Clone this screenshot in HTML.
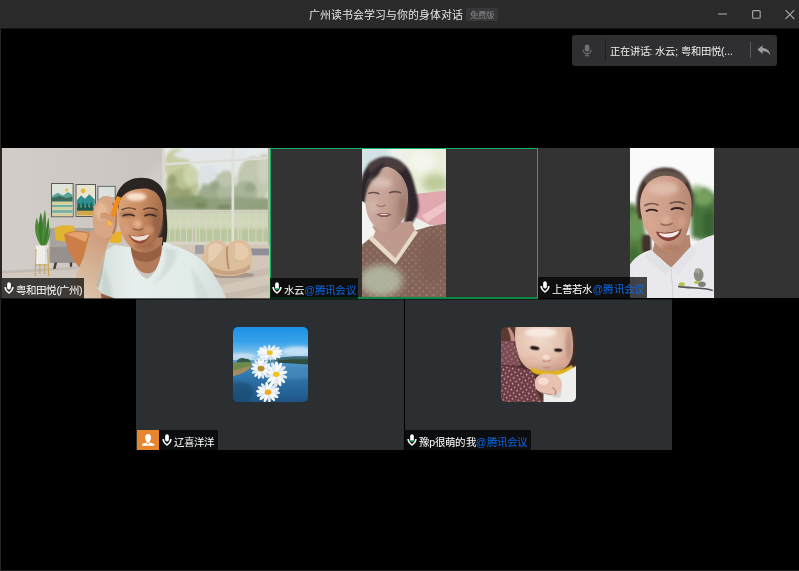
<!DOCTYPE html>
<html lang="zh-CN">
<head>
<meta charset="utf-8">
<title>广州读书会学习与你的身体对话</title>
<style>
*{margin:0;padding:0;box-sizing:border-box}
html,body{width:799px;height:571px;overflow:hidden;background:#000}
body{position:relative;-webkit-font-smoothing:antialiased;font-family:"Liberation Sans",sans-serif;color:#fff}
.abs{position:absolute}
#win{position:absolute;left:0;top:0;width:799px;height:571px;background:#000;will-change:transform}
#bl{position:absolute;left:0;top:0;width:1px;height:571px;background:#262626}
#bb{position:absolute;left:0;top:570px;width:799px;height:1px;background:#222}
#titlebar{position:absolute;left:0;top:0;width:799px;height:28px;background:#2a2a2a;box-shadow:0 1px 0 #181818}
#title{position:absolute;left:309px;top:1px;height:28px;line-height:28px;font-size:10.9px;color:#e6e6e6;white-space:nowrap}
#badge{position:absolute;left:466px;top:8px;width:32px;height:13px;line-height:15.5px;background:#37373a;border-radius:2px;font-size:8.4px;color:#8a8a8c;overflow:hidden;text-align:center;white-space:nowrap}
#speaker{position:absolute;left:572px;top:35px;width:205px;height:30.5px;background:#2f2f31;border-radius:3px}
#speaker .txt{position:absolute;left:37.5px;top:1px;height:30px;line-height:31px;font-size:10.25px;color:#f0f0f0;white-space:nowrap}
#speaker .d1{position:absolute;left:33px;top:4px;width:1px;height:23px;background:#1d1e22}
#speaker .d2{position:absolute;left:178px;top:7px;width:1px;height:16px;background:#5a5a5c}
.tile{position:absolute;width:268px;height:150px;background:#333;overflow:hidden}
.tile.b{background:#2c2f32}
.label{position:absolute;left:0;bottom:0;height:20px;line-height:24.6px;font-size:10.5px;letter-spacing:.15px;color:#fff;background:rgba(0,0,0,.71);white-space:nowrap;overflow:hidden;padding-left:14px;padding-right:0}
.label .at{color:#0c66e4}
.label svg.mic{position:absolute;left:2.3px;top:4.3px}
.avatar{position:absolute;left:97px;top:27px;width:75px;height:75px;border-radius:5px;overflow:hidden}
</style>
</head>
<body>
<div id="win">
  <div id="bl"></div><div id="bb"></div>
  <div id="titlebar">
    <div id="title">广州读书会学习与你的身体对话</div>
    <div id="badge">免费版</div>
    <svg class="abs" style="left:710px;top:0" width="89" height="28" viewBox="0 0 89 28">
      <path d="M8 14H17" stroke="#a6a6a6" stroke-width="1.1" fill="none"/>
      <rect x="42.6" y="10.6" width="7.6" height="7.6" rx="1" stroke="#a6a6a6" stroke-width="1.1" fill="none"/>
      <path d="M75.5 10.2L84.3 19M84.3 10.2L75.5 19" stroke="#a6a6a6" stroke-width="1.1" fill="none"/>
    </svg>
  </div>

  <div id="speaker">
    <svg class="abs" style="left:10px;top:9px" width="10.2" height="12.8" viewBox="0 0 12 15">
      <rect x="3.3" y="0.6" width="5.4" height="8.6" rx="2.7" fill="#707175"/>
      <path d="M1.3 6.6a4.7 4.7 0 0 0 9.4 0M6 11.3V13.6M3.4 13.8H8.6" stroke="#707175" stroke-width="1.4" fill="none"/>
    </svg>
    <div class="d1"></div>
    <div class="txt">正在讲话: 水云; 粤和田悦(...</div>
    <div class="d2"></div>
    <svg class="abs" style="left:185px;top:10px" width="14" height="11" viewBox="0 0 14 11">
      <path d="M5.6 0.3L0.4 4.6L5.6 8.9V6.3C9.2 6.2 11.6 7.4 13.2 10.4C13 6.2 10.6 3.2 5.6 2.9Z" fill="#9a9a9c"/>
    </svg>
  </div>

  <!-- TILE 1 -->
  <div class="tile" id="t1" style="left:1px;top:148px;width:269px;height:151px;background:#2b2b2b">
    <svg class="abs" style="left:1px;top:0" width="268" height="151" viewBox="0 0 268 151">
<defs>
<filter id="f1a" x="-20%" y="-20%" width="140%" height="140%"><feGaussianBlur stdDeviation="1.5"/></filter>
<filter id="f1b" x="-30%" y="-30%" width="160%" height="160%"><feGaussianBlur stdDeviation="4"/></filter>
<filter id="f1c" x="-30%" y="-30%" width="160%" height="160%"><feGaussianBlur stdDeviation="8"/></filter>
<linearGradient id="wall1" x1="0" y1="0" x2="1" y2="0"><stop offset="0" stop-color="#d2cdc9"/><stop offset="0.6" stop-color="#cac4c0"/><stop offset="1" stop-color="#c3bdb8"/></linearGradient>
<linearGradient id="sky1" x1="0" y1="0" x2="0" y2="1"><stop offset="0" stop-color="#e6eaec"/><stop offset="0.55" stop-color="#e2e7e2"/><stop offset="0.7" stop-color="#c3cdb0"/><stop offset="1" stop-color="#cdd6b4"/></linearGradient>
<linearGradient id="face1" x1="0" y1="0" x2="1" y2="0.3"><stop offset="0" stop-color="#dca67c"/><stop offset="0.5" stop-color="#cb8f66"/><stop offset="1" stop-color="#a46c48"/></linearGradient>
<linearGradient id="shirt1" x1="0" y1="0" x2="1" y2="0"><stop offset="0" stop-color="#d3dedb"/><stop offset="0.3" stop-color="#e6efed"/><stop offset="0.75" stop-color="#e1ebe8"/><stop offset="1" stop-color="#d2dcda"/></linearGradient>
<clipPath id="c1"><rect x="0" y="0" width="268" height="151"/></clipPath>
<linearGradient id="arm1" x1="0.7" y1="0" x2="0.2" y2="1"><stop offset="0" stop-color="#cf9a78"/><stop offset="0.45" stop-color="#d4b092"/><stop offset="1" stop-color="#dccab4"/></linearGradient>
</defs>
<g clip-path="url(#c1)"><g transform="translate(-2,-3) scale(0.340426)">
<!-- wall -->
<rect x="0" y="0" width="800" height="460" fill="url(#wall1)"/>
<path d="M480,40 L300,230 L380,230 L480,120Z" fill="#d8d3cf" opacity=".5" filter="url(#f1c)"/>
<!-- floor left -->
<path d="M0,374 L230,362 L230,460 L0,460Z" fill="#d2c9c0"/>
<path d="M0,370 L230,358 L230,365 L0,378Z" fill="#b9b0a8" opacity=".6"/>
<!-- window -->
<rect x="480" y="6" width="312" height="288" fill="url(#sky1)"/>
<g filter="url(#f1b)">
<ellipse cx="520" cy="60" rx="38" ry="50" fill="#c6cea2"/>
<ellipse cx="535" cy="120" rx="48" ry="50" fill="#b7c192"/>
<ellipse cx="512" cy="150" rx="30" ry="30" fill="#98a474"/>
<ellipse cx="560" cy="90" rx="22" ry="30" fill="#cdd4ac"/>
<ellipse cx="640" cy="130" rx="50" ry="45" fill="#adb89c"/>
<ellipse cx="610" cy="150" rx="30" ry="30" fill="#9eab8c"/>
<ellipse cx="665" cy="100" rx="25" ry="25" fill="#bac4aa"/>
<ellipse cx="745" cy="105" rx="48" ry="70" fill="#c0c8ae"/>
<ellipse cx="720" cy="140" rx="35" ry="35" fill="#a9b498"/>
<ellipse cx="775" cy="70" rx="20" ry="45" fill="#cbd1bc"/>
<rect x="480" y="156" width="312" height="36" fill="#8f9f7a"/>
<ellipse cx="560" cy="165" rx="50" ry="18" fill="#85966c"/>
<ellipse cx="700" cy="168" rx="60" ry="16" fill="#93a382"/>
<rect x="480" y="200" width="312" height="50" fill="#cfd8b6"/>
<rect x="480" y="245" width="312" height="45" fill="#b9c79e"/>
<ellipse cx="620" cy="28" rx="110" ry="18" fill="#e4e7e9"/>
<ellipse cx="610" cy="85" rx="28" ry="30" fill="#dde3e4"/>
</g>
<g filter="url(#f1b)" opacity=".7">
<ellipse cx="505" cy="105" rx="14" ry="18" fill="#8a9666"/>
<ellipse cx="548" cy="140" rx="16" ry="12" fill="#8a9666"/>
<ellipse cx="630" cy="120" rx="14" ry="14" fill="#8f9c80"/>
<ellipse cx="735" cy="125" rx="16" ry="14" fill="#93a084"/>
<ellipse cx="590" cy="178" rx="20" ry="8" fill="#6f8058"/>
<ellipse cx="660" cy="182" rx="22" ry="7" fill="#6f8058"/>
</g>
<!-- railing -->
<g stroke="#d9d5c6" stroke-width="3" fill="none" opacity=".92">
<path d="M486,193H792" stroke-width="4"/>
<path d="M498,196V285M514,196V285M530,196V285M548,196V285M566,196V285M586,196V285M606,196V285M626,196V285M648,196V285M668,196V285M708,196V285M730,196V285M752,196V285M772,196V285"/>
<path d="M576,196V285M700,196V285" stroke-width="5"/>
</g>
<path d="M486,210H792" stroke="#d2cfbe" stroke-width="2.5" opacity=".8"/>
<!-- window frames -->
<rect x="476" y="6" width="9" height="288" fill="#dcd7d1"/>
<path d="M481,53 L792,35 L792,42 L481,60Z" fill="#e0dcd6"/>
<rect x="680" y="6" width="8" height="288" fill="#e2ded8"/>
<rect x="480" y="284" width="312" height="9" fill="#dad3c8"/>
<rect x="787" y="6" width="7" height="454" fill="#b5aea6"/>
<!-- floor right -->
<rect x="486" y="293" width="306" height="170" fill="#d3c7b9"/>
<rect x="700" y="304" width="90" height="20" fill="#8f8e99"/>
<rect x="573" y="294" width="26" height="26" fill="#a09ea6"/>
<path d="M600,400 L790,360 L790,380 L620,420Z" fill="#c4b8aa" opacity=".7" filter="url(#f1a)"/>
<path d="M640,440 L790,410 L790,430 L680,456Z" fill="#c4b8aa" opacity=".7" filter="url(#f1a)"/>
<!-- beanbag -->
<ellipse cx="672" cy="382" rx="75" ry="9" fill="#a3968a" filter="url(#f1a)"/>
<g filter="url(#f1a)">
<path d="M597,335 C595,300 615,278 640,280 C655,281 664,290 668,300 C675,285 690,275 710,278 C735,283 745,315 740,345 C738,370 715,385 670,385 C625,385 600,370 597,335Z" fill="#dcbd9c"/>
<path d="M612,300 C625,285 645,285 655,300 C645,320 630,340 612,345Z" fill="#ead2b6" opacity=".8"/>
<path d="M690,290 C710,283 728,295 732,320 C720,340 700,345 690,330Z" fill="#e8cfb2" opacity=".8"/>
<path d="M668,298 C664,320 668,345 672,365" stroke="#b48c68" stroke-width="5" fill="none"/>
<path d="M610,350 C640,375 700,378 735,350 L735,365 C700,388 640,388 605,362Z" fill="#c39e7c" opacity=".8"/>
</g>
<!-- paintings -->
<g>
<rect x="150" y="112" width="66" height="100" fill="#454543"/>
<rect x="152.5" y="114.5" width="61" height="95" fill="#dfe5db"/>
<path d="M153,150 L170,140 L185,148 L200,138 L213,146 V165 H153Z" fill="#5aa595"/>
<path d="M153,156 L175,150 L195,156 L213,152 V168 H153Z" fill="#3a6a5a"/>
<rect x="153" y="166" width="60" height="43" fill="#d4d0a4"/>
<path d="M153,176 H213 V182 H153Z M153,192 H213 V199 H153Z" fill="#6ab0a4"/>
<circle cx="196" cy="132" r="5" fill="#e8c24a"/>
<rect x="222" y="115" width="60" height="96" fill="#454543"/>
<rect x="224.5" y="117.5" width="55" height="91" fill="#e8e4d2"/>
<circle cx="244" cy="135" r="7" fill="#e6b838"/>
<path d="M226,162 L238,148 L250,158 L262,145 L278,160 V180 H226Z" fill="#2f9090"/>
<path d="M226,185 L232,168 L238,185 L244,165 L250,185 L256,168 L262,185 L268,166 L274,185 L278,175 V196 H226Z" fill="#1d5a4e"/>
<rect x="226" y="193" width="52" height="14" fill="#d0a848"/>
<rect x="286" y="120" width="54" height="68" fill="#6a6a66"/>
<rect x="289" y="123" width="48" height="62" fill="#d9e2dd"/>
<path d="M289,160 L305,150 L320,160 L337,152 V185 H289Z" fill="#7ab4b0"/>
</g>
<!-- sofa -->
<path d="M146,250 Q146,244 155,244 L300,244 L300,345 L150,345 Q146,345 146,338Z" fill="#a9a39f"/>
<rect x="146" y="300" width="160" height="46" fill="#97918d"/>
<path d="M160,345 L156,364 L163,364 L168,345Z M205,345 L205,358 L212,358 L212,345Z" fill="#4a3c30"/>
<!-- cushions -->
<path d="M160,242 Q188,232 218,238 L220,280 Q190,286 164,280Z" fill="#e2b530"/>
<path d="M188,262 Q225,244 262,258 Q268,300 258,335 Q250,355 236,364 Q200,325 188,262Z" fill="#cd7d48"/>
<path d="M195,262 Q225,250 258,260 Q258,275 250,285 Q220,270 195,262Z" fill="#e9ab78" opacity=".8"/>
<!-- plant -->
<g fill="#4a8a38">
<path d="M122,298 C100,270 100,235 108,214 C118,240 122,270 124,298Z"/>
<path d="M122,298 C112,260 112,220 120,198 C128,225 130,265 126,298Z" fill="#3c7a30"/>
<path d="M124,298 C122,250 126,210 132,190 C138,220 136,265 128,298Z"/>
<path d="M126,298 C132,260 138,235 142,212 C148,245 140,280 130,298Z" fill="#3c7a30"/>
<path d="M128,298 C138,275 145,255 147,238 C150,265 142,288 132,298Z"/>
</g>
<rect x="105" y="295" width="36" height="56" rx="3" fill="#efede9"/>
<rect x="132" y="295" width="9" height="56" rx="3" fill="#e2dfda"/>
<path d="M106,305 L103,386 M140,305 L143,386 M117,350 V378 M131,350 V378 M104,352H142" stroke="#c9a04a" stroke-width="2.6" fill="none"/>
<!-- yellow bit under hand -->
<rect x="322" y="254" width="36" height="34" rx="8" fill="#e8b328"/>
<!-- hair -->
<path d="M338,200 C330,135 365,96 415,96 C468,96 494,135 488,190 C492,225 494,265 486,292 L462,292 L466,210 L350,215Z" fill="#2a2422"/>
<path d="M470,250 C480,262 488,280 480,296 L462,290Z" fill="#2a2422"/>
<!-- neck -->
<path d="M382,280 L384,320 C395,375 440,400 470,350 L478,270Z" fill="#b27a58"/>
<path d="M384,300 C410,325 450,320 475,290 L474,320 C450,350 410,350 386,325Z" fill="#925a3e" opacity=".8" filter="url(#f1a)"/>
<!-- face -->
<path d="M350,170 C358,136 398,126 430,128 C462,132 480,160 479,200 C479,252 456,300 413,314 C374,305 349,260 347,210Z" fill="url(#face1)"/>
<g filter="url(#f1b)">
<ellipse cx="400" cy="152" rx="30" ry="12" fill="#f8e2cc"/>
<ellipse cx="404" cy="232" rx="12" ry="12" fill="#e4ae8e"/>
<ellipse cx="368" cy="248" rx="14" ry="14" fill="#d99878"/>
<ellipse cx="462" cy="230" rx="14" ry="40" fill="#9a6446"/>
<ellipse cx="372" cy="204" rx="22" ry="9" fill="#8e5c40" opacity=".55"/>
<ellipse cx="442" cy="203" rx="22" ry="9" fill="#8e5c40" opacity=".55"/>
<ellipse cx="425" cy="296" rx="30" ry="10" fill="#a06848" opacity=".7"/>
<ellipse cx="436" cy="250" rx="16" ry="14" fill="#dca07a" opacity=".6"/>
</g>
<g stroke="#3b2722" fill="none" stroke-linecap="round">
<path d="M358,190 Q378,180 398,189" stroke-width="4" opacity=".75"/>
<path d="M422,189 Q442,180 462,191" stroke-width="4" opacity=".75"/>
<path d="M362,208 Q378,200 394,208" stroke-width="4.5"/>
<path d="M426,208 Q442,200 458,209" stroke-width="4.5"/>
<path d="M392,246 Q406,254 420,246" stroke-width="3" stroke="#8a523a"/>
</g>
<path d="M378,264 Q410,272 442,259 Q438,286 410,290 Q386,287 378,264Z" fill="#9a4a3c"/>
<path d="M382,265 Q410,274 440,261 Q436,279 410,282 Q388,279 382,265Z" fill="#ecdfd2"/>
<!-- t-shirt -->
<path d="M336,294 C310,308 290,330 282,360 C274,400 272,430 278,460 L668,460 C652,420 632,380 600,345 C570,315 520,296 480,284 C476,330 456,386 432,393 C405,386 388,340 384,300Z" fill="url(#shirt1)"/>
<g filter="url(#f1b)" opacity=".7">
<path d="M300,350 C320,380 330,420 330,460 L300,460Z" fill="#c3cfcc"/>
<path d="M480,300 C500,340 470,400 440,410 C480,400 520,350 520,310Z" fill="#cbd6d3"/>
<path d="M560,360 C590,390 610,430 620,460 L580,460Z" fill="#cfd9d6"/>
</g>
<!-- forearm -->
<path d="M200,460 L212,420 L226,375 L246,328 L266,250 L338,252 L318,288 L304,326 L290,376 L281,415 L298,434 L336,452 L336,460Z" fill="url(#arm1)"/>
<path d="M296,436 L336,450 L336,460 L300,460Z" fill="#8e5e48"/>
<path d="M281,415 L290,376 L304,326 L312,305 L300,380 L290,420Z" fill="#b08c70" opacity=".5" filter="url(#f1a)"/>
<!-- hand -->
<path d="M272,215 C270,180 290,150 315,150 C338,150 352,175 350,210 C350,245 338,272 312,274 C285,274 272,250 272,215Z" fill="#d8a683"/>
<path d="M330,170 C345,190 345,230 332,262" stroke="#b27c5c" stroke-width="5" fill="none" filter="url(#f1a)"/>
<ellipse cx="298" cy="195" rx="18" ry="26" fill="#e6b896" filter="url(#f1b)"/>
<!-- pen -->
<path d="M343,150 L356,154 L328,238 L314,233Z" fill="#ef8d1c"/>
<path d="M320,212 L334,217 L328,238 L314,233Z" fill="#f6b83a"/>
<path d="M296,200 C312,196 330,204 340,218 L334,232 C322,220 308,214 294,216Z" fill="#cf9976"/>
</g></g>
</svg>
    <div class="label" style="left:1px;width:82px;height:21px">
      <svg class="mic" width="10" height="13" viewBox="0 0 10 13"><rect x="3.15" y="0.3" width="3.7" height="7.1" rx="1.85" fill="#fff"/><path d="M1.1 4.9C1.1 7.2 2.6 9.2 5 11C7.4 9.2 8.9 7.2 8.9 4.9" stroke="#fff" stroke-width="1.5" fill="none" stroke-linejoin="miter"/></svg>粤和田悦<span style="letter-spacing:-.9px">(</span>广州<span style="margin-left:-.6px">)</span></div>
  </div>

  <!-- TILE 2 -->
  <div class="tile" id="t2" style="left:270px;top:148px;height:151px">
    <div class="abs" style="left:0;top:0;width:268px;height:151px;border:1px solid #0db45c;border-bottom:2px solid #0b8a47"></div>
    <svg class="abs" style="left:92px;top:1px" width="84" height="148" viewBox="0 0 84 148">
<defs>
<filter id="f2a" x="-20%" y="-20%" width="140%" height="140%"><feGaussianBlur stdDeviation="2.5"/></filter>
<filter id="f2b" x="-30%" y="-30%" width="160%" height="160%"><feGaussianBlur stdDeviation="7"/></filter>
<filter id="f2m" x="-30%" y="-30%" width="160%" height="160%"><feGaussianBlur stdDeviation="4.5"/></filter>
<filter id="f2c" x="-40%" y="-40%" width="180%" height="180%"><feGaussianBlur stdDeviation="14"/></filter>
<linearGradient id="face2" x1="0" y1="0" x2="1" y2="0.2"><stop offset="0" stop-color="#cfb0a4"/><stop offset="0.6" stop-color="#c5a194"/><stop offset="1" stop-color="#a98478"/></linearGradient>
<pattern id="dots2" width="26" height="26" patternUnits="userSpaceOnUse"><circle cx="6" cy="7" r="3.2" fill="#bfa898"/><circle cx="19" cy="20" r="3.2" fill="#b39c8c"/></pattern>
<clipPath id="c2"><rect x="0" y="0" width="84" height="148"/></clipPath>
</defs>
<g clip-path="url(#c2)"><g transform="scale(0.27137) translate(-80,-15)">
<rect x="70" y="0" width="330" height="580" fill="#eef0ec"/>
<rect x="70" y="0" width="110" height="120" fill="#d2e2e6" filter="url(#f2c)"/>
<!-- bright bg top-right -->
<g filter="url(#f2c)">
<rect x="240" y="10" width="160" height="180" fill="#e9eed8"/>
<ellipse cx="350" cy="140" rx="50" ry="35" fill="#bccb98"/>
<ellipse cx="300" cy="60" rx="50" ry="40" fill="#f4f6ee"/>
</g>
<!-- pink cloth -->
<g filter="url(#f2a)">
<path d="M262,182 L395,168 L395,295 L330,295 L268,262Z" fill="#e2a8b0"/>
<path d="M300,260 L395,205 L395,235 L320,285Z" fill="#efc4c8"/>
<path d="M285,200 L395,178 L395,192 L290,218Z" fill="#e3a8b0"/>
</g>
<!-- hair -->
<g filter="url(#f2m)">
<path d="M70,215 C66,120 95,52 160,44 C215,40 255,76 270,135 C284,190 292,215 288,240 C282,262 268,285 258,296 L236,292 L244,160 L100,150 L90,215Z" fill="#2e272b"/>
<path d="M100,72 C130,40 200,36 240,78 L230,96 L110,104Z" fill="#55494c" opacity=".7"/>
</g>
<!-- neck -->
<path d="M118,300 L118,345 L203,424 L278,322 L262,280Z" fill="#bf998b"/>
<!-- face -->
<g filter="url(#f2a)">
<path d="M90,165 C96,120 135,84 175,80 C222,92 250,140 250,190 C250,250 222,312 172,324 C126,318 90,262 88,200Z" fill="url(#face2)"/>
</g>
<path d="M74,210 C78,150 110,95 165,62 C150,100 125,135 104,150 C96,170 92,190 88,215Z" fill="#2e272b" filter="url(#f2m)"/>
<g filter="url(#f2b)">
<ellipse cx="150" cy="140" rx="40" ry="18" fill="#d9beb2"/>
<ellipse cx="120" cy="225" rx="18" ry="25" fill="#d4b4a8"/>
<ellipse cx="230" cy="230" rx="14" ry="45" fill="#a07c70"/>
</g>
<g filter="url(#f2a)" stroke-linecap="round" fill="none">
<path d="M105,178 Q125,172 142,180" stroke="#6a5050" stroke-width="6"/>
<path d="M182,176 Q202,168 222,176" stroke="#6a5050" stroke-width="6"/>
<path d="M135,222 Q150,232 166,222" stroke="#a07a70" stroke-width="5"/>
<path d="M132,256 Q160,246 190,256 Q162,276 132,256Z" fill="#8f5658" stroke="none"/>
<path d="M142,256 Q160,252 180,256 Q160,262 142,256Z" fill="#e6d6d0" stroke="none"/>
</g>
<!-- white patch left -->
<path d="M78,205 L92,215 C96,260 112,300 130,318 L118,345 L78,372Z" fill="#f3f3f1" filter="url(#f2a)"/>
<!-- shirt -->
<path d="M70,376 L116,338 L203,420 L274,316 L330,300 L395,290 L395,580 L70,580Z" fill="#846458"/>
<path d="M70,376 L116,338 L203,420 L274,316 L330,300 L395,290 L395,580 L70,580Z" fill="url(#dots2)" opacity=".55"/>
<path d="M117,335 L203,417 L273,314 L287,321 L204,441 L103,346Z" fill="#e6dac6" filter="url(#f2a)"/>
<g filter="url(#f2c)">
<ellipse cx="150" cy="500" rx="80" ry="58" fill="#b9c4ac" opacity=".8"/>
<ellipse cx="340" cy="420" rx="50" ry="90" fill="#7a5c50" opacity=".6"/>
</g>
</g></g>
</svg>
    <div class="label" style="width:88px;height:21px">
      <svg class="mic" width="10" height="13" viewBox="0 0 10 13"><rect x="3.15" y="0.3" width="3.7" height="7.1" rx="1.85" fill="#fff"/><rect x="3.15" y="5.9" width="3.7" height="1.5" rx="0.75" fill="#1fc465"/><path d="M1.1 4.9C1.1 7.2 2.6 9.2 5 11C7.4 9.2 8.9 7.2 8.9 4.9" stroke="#fff" stroke-width="1.5" fill="none" stroke-linejoin="miter"/></svg>水云<span class="at">@腾讯会议</span></div>
  </div>

  <!-- TILE 3 -->
  <div class="tile" id="t3" style="left:538px;width:261px;top:148px">
    <svg class="abs" style="left:92px;top:0" width="84" height="151" viewBox="0 0 84 151">
<defs>
<filter id="f3a" x="-20%" y="-20%" width="140%" height="140%"><feGaussianBlur stdDeviation="2.5"/></filter>
<filter id="f3b" x="-30%" y="-30%" width="160%" height="160%"><feGaussianBlur stdDeviation="7"/></filter>
<filter id="f3m" x="-30%" y="-30%" width="160%" height="160%"><feGaussianBlur stdDeviation="4"/></filter>
<filter id="f3c" x="-40%" y="-40%" width="180%" height="180%"><feGaussianBlur stdDeviation="12"/></filter>
<linearGradient id="face3" x1="0" y1="0" x2="1" y2="0.2"><stop offset="0" stop-color="#d8ae9a"/><stop offset="0.55" stop-color="#cfa08b"/><stop offset="1" stop-color="#b68872"/></linearGradient>
<clipPath id="c3"><rect x="0" y="0" width="84" height="151"/></clipPath>
</defs>
<g clip-path="url(#c3)"><g transform="scale(0.27137) translate(-73,-10)">
<rect x="60" y="0" width="340" height="580" fill="#fafafa"/>
<!-- trees -->
<g filter="url(#f3b)">
<path d="M60,215 C85,205 110,230 125,260 L140,480 L60,500Z" fill="#527e40"/>
<ellipse cx="92" cy="300" rx="30" ry="50" fill="#6b9654"/>
<ellipse cx="85" cy="420" rx="25" ry="50" fill="#426e36"/>
<path d="M295,170 C320,140 360,150 395,190 L395,365 L300,340Z" fill="#46763c"/>
<ellipse cx="345" cy="195" rx="35" ry="28" fill="#76a05e"/>
<ellipse cx="365" cy="290" rx="25" ry="50" fill="#386432"/>
<ellipse cx="318" cy="160" rx="18" ry="14" fill="#98b87c"/>
</g>
<!-- ponytail -->
<path d="M120,330 C112,370 120,410 134,425 L152,400 L150,330Z" fill="#3f302b" filter="url(#f3m)"/>
<!-- hair -->
<g filter="url(#f3m)">
<path d="M98,240 C88,152 130,84 200,82 C262,80 306,130 307,205 L302,262 L106,272Z" fill="#45352f"/>
<path d="M122,122 C150,84 245,80 284,126 L270,150 L135,150Z" fill="#6e5c56" opacity=".8"/>
</g>
<!-- neck -->
<path d="M165,350 L150,420 L225,450 L300,395 L292,330Z" fill="#b58670"/>
<!-- face -->
<g filter="url(#f3a)">
<path d="M110,215 C112,150 155,112 205,112 C258,112 298,152 300,215 C302,290 275,375 225,397 C170,385 112,310 110,215Z" fill="url(#face3)"/>
</g>
<g filter="url(#f3b)">
<ellipse cx="195" cy="160" rx="55" ry="24" fill="#dfbcaa"/>
<ellipse cx="150" cy="290" rx="20" ry="22" fill="#dba48c"/>
<ellipse cx="262" cy="282" rx="18" ry="24" fill="#d39c84"/>
<ellipse cx="205" cy="275" rx="14" ry="14" fill="#e0b098"/>
<ellipse cx="225" cy="380" rx="40" ry="14" fill="#b07e66"/>
</g>
<g filter="url(#f3a)" stroke-linecap="round" fill="none">
<path d="M128,222 Q152,208 176,220" stroke="#5a4038" stroke-width="6" opacity=".8"/>
<path d="M222,214 Q250,202 276,216" stroke="#5a4038" stroke-width="6" opacity=".8"/>
<path d="M134,242 Q152,232 172,242" stroke="#35241f" stroke-width="7"/>
<path d="M226,236 Q246,226 268,236" stroke="#35241f" stroke-width="7"/>
<path d="M188,290 Q206,300 228,288" stroke="#9a6a54" stroke-width="6"/>
<path d="M168,318 Q215,330 264,308 Q258,348 216,354 Q178,350 168,318Z" fill="#8a4238" stroke="none"/>
<path d="M178,322 Q215,332 256,314 Q250,336 216,340 Q186,338 178,322Z" fill="#f3ece8" stroke="none"/>
</g>
<!-- shirt -->
<path d="M60,470 C70,430 100,400 150,385 L225,452 L300,370 C340,340 380,330 400,325 L400,580 L60,580Z" fill="#e9e9ed"/>
<g filter="url(#f3a)">
<path d="M150,385 L225,452 L205,480 L128,410Z" fill="#e2e2e6"/>
<path d="M300,370 L225,452 L250,478 L322,392Z" fill="#e4e4e8"/>
<path d="M80,480 C100,500 110,540 108,575 L75,575Z" fill="#d9dade" opacity=".8"/>
<path d="M225,455 L232,575" stroke="#d4d4d8" stroke-width="4" fill="none"/>
</g>
<!-- embroidery -->
<g filter="url(#f3a)">
<path d="M250,520 C290,528 340,522 378,535" stroke="#55565a" stroke-width="6" fill="none"/>
<ellipse cx="326" cy="478" rx="18" ry="24" fill="#8b8b82"/>
<ellipse cx="322" cy="462" rx="10" ry="9" fill="#a3a398"/>
<ellipse cx="338" cy="512" rx="14" ry="10" fill="#7e8078"/>
<ellipse cx="264" cy="512" rx="11" ry="7" fill="#b7c044"/>
<ellipse cx="318" cy="505" rx="9" ry="6" fill="#b7c044"/>
</g>
</g></g>
</svg>
    <div class="label" style="width:109px;height:21px">
      <svg class="mic" width="10" height="13" viewBox="0 0 10 13"><rect x="3.15" y="0.3" width="3.7" height="7.1" rx="1.85" fill="#fff"/><path d="M1.1 4.9C1.1 7.2 2.6 9.2 5 11C7.4 9.2 8.9 7.2 8.9 4.9" stroke="#fff" stroke-width="1.5" fill="none" stroke-linejoin="miter"/></svg>上善若水<span class="at">@腾讯会议</span></div>
  </div>

  <div class="abs" style="left:0;top:298px;width:270px;height:1px;background:rgba(0,0,0,.6)"></div>
  <div class="abs" style="left:538px;top:298px;width:261px;height:1px;background:rgba(0,0,0,.6)"></div>

  <div class="abs" style="left:136px;top:299px;width:268px;height:1px;background:#191b1d"></div>
  <div class="abs" style="left:405px;top:299px;width:267px;height:1px;background:#191b1d"></div>
  <!-- TILE 4 -->
  <div class="tile b" id="t4" style="left:136px;top:300px">
    <div class="avatar"><svg class="abs" style="left:0;top:0" width="75" height="75" viewBox="0 0 75 75">
<defs>
<filter id="fa1" x="-20%" y="-20%" width="140%" height="140%"><feGaussianBlur stdDeviation="2"/></filter>
<filter id="fa2" x="-30%" y="-30%" width="160%" height="160%"><feGaussianBlur stdDeviation="8"/></filter>
<linearGradient id="skyA" x1="0" y1="0" x2="0" y2="1"><stop offset="0" stop-color="#1a8ee2"/><stop offset="0.45" stop-color="#36a2ea"/><stop offset="0.8" stop-color="#7cc0ec"/><stop offset="1" stop-color="#b4d8f0"/></linearGradient>
<linearGradient id="waterA" x1="0" y1="0" x2="0" y2="1"><stop offset="0" stop-color="#5a9fd2"/><stop offset="0.3" stop-color="#3379b2"/><stop offset="1" stop-color="#1d5484"/></linearGradient>
</defs>
<g transform="scale(0.17516) translate(-103,-68)">
<rect x="95" y="60" width="445" height="200" fill="url(#skyA)"/>
<g filter="url(#fa2)">
<ellipse cx="470" cy="208" rx="90" ry="28" fill="#c2dff4"/>
<ellipse cx="160" cy="235" rx="70" ry="18" fill="#c4dff2"/>
</g>
<rect x="95" y="258" width="445" height="245" fill="url(#waterA)"/>
<g filter="url(#fa2)"><ellipse cx="460" cy="335" rx="90" ry="30" fill="#4f8fbe" opacity=".55"/><ellipse cx="140" cy="440" rx="80" ry="60" fill="#173f60" opacity=".5"/><rect x="60" y="40" width="520" height="10" fill="#000" opacity="0"/></g>
<g filter="url(#fa1)">
<path d="M335,250 C380,238 440,232 535,236 L535,262 L335,262Z" fill="#3f6772"/>
<path d="M350,262 C400,252 470,250 535,254 L535,282 C470,276 400,274 350,270Z" fill="#2d4c3c"/>
<path d="M125,262 C135,244 160,240 175,250 C190,246 200,256 205,268 L125,272Z" fill="#34584a"/>
<path d="M95,272 L205,268 C215,290 200,310 170,325 C140,340 115,345 95,352Z" fill="#6d8a4e"/>
<path d="M95,318 C130,312 170,300 205,288 C200,310 160,335 95,352Z" fill="#a58c60"/>
<path d="M312,250 C300,300 305,350 300,400" stroke="#4a7a4c" stroke-width="7" fill="none"/>
<path d="M320,255 C335,280 340,300 345,330" stroke="#4a7a4c" stroke-width="6" fill="none"/>
</g>
<g filter="url(#fa1)">
<ellipse cx="354.1" cy="219.4" rx="32.8" ry="11.2" fill="#dfe9f2" transform="rotate(6.2 354.1 219.4)"/>
<ellipse cx="346.9" cy="229.9" rx="29.4" ry="10.0" fill="#f6f8fa" transform="rotate(23.7 346.9 229.9)"/>
<ellipse cx="333.0" cy="237.4" rx="23.8" ry="8.1" fill="#f6f8fa" transform="rotate(48.3 333.0 237.4)"/>
<ellipse cx="315.1" cy="240.5" rx="20.3" ry="6.9" fill="#dfe9f2" transform="rotate(85.3 315.1 240.5)"/>
<ellipse cx="296.8" cy="238.5" rx="22.7" ry="7.7" fill="#f6f8fa" transform="rotate(124.6 296.8 238.5)"/>
<ellipse cx="281.7" cy="231.9" rx="28.2" ry="9.6" fill="#f6f8fa" transform="rotate(151.7 281.7 231.9)"/>
<ellipse cx="272.8" cy="221.9" rx="32.3" ry="11.0" fill="#dfe9f2" transform="rotate(170.2 272.8 221.9)"/>
<ellipse cx="271.9" cy="210.6" rx="32.8" ry="11.2" fill="#f6f8fa" transform="rotate(-173.8 271.9 210.6)"/>
<ellipse cx="279.1" cy="200.1" rx="29.4" ry="10.0" fill="#f6f8fa" transform="rotate(-156.3 279.1 200.1)"/>
<ellipse cx="293.0" cy="192.6" rx="23.8" ry="8.1" fill="#dfe9f2" transform="rotate(-131.7 293.0 192.6)"/>
<ellipse cx="310.9" cy="189.5" rx="20.3" ry="6.9" fill="#f6f8fa" transform="rotate(-94.7 310.9 189.5)"/>
<ellipse cx="329.2" cy="191.5" rx="22.7" ry="7.7" fill="#f6f8fa" transform="rotate(-55.4 329.2 191.5)"/>
<ellipse cx="344.3" cy="198.1" rx="28.2" ry="9.6" fill="#dfe9f2" transform="rotate(-28.3 344.3 198.1)"/>
<ellipse cx="353.2" cy="208.1" rx="32.3" ry="11.0" fill="#f6f8fa" transform="rotate(-9.8 353.2 208.1)"/>
<ellipse cx="313" cy="215" rx="17" ry="13.6" fill="#f2c21c"/>
<ellipse cx="295.5" cy="305.0" rx="25.8" ry="8.8" fill="#dfe9f2" transform="rotate(0.0 295.5 305.0)"/>
<ellipse cx="292.3" cy="319.6" rx="25.9" ry="8.8" fill="#f6f8fa" transform="rotate(26.5 292.3 319.6)"/>
<ellipse cx="283.3" cy="331.3" rx="26.3" ry="9.0" fill="#f6f8fa" transform="rotate(52.4 283.3 331.3)"/>
<ellipse cx="270.2" cy="337.8" rx="26.6" ry="9.1" fill="#dfe9f2" transform="rotate(77.6 270.2 337.8)"/>
<ellipse cx="255.8" cy="337.8" rx="26.6" ry="9.1" fill="#f6f8fa" transform="rotate(102.4 255.8 337.8)"/>
<ellipse cx="242.7" cy="331.3" rx="26.3" ry="9.0" fill="#f6f8fa" transform="rotate(127.6 242.7 331.3)"/>
<ellipse cx="233.7" cy="319.6" rx="25.9" ry="8.8" fill="#dfe9f2" transform="rotate(153.5 233.7 319.6)"/>
<ellipse cx="230.5" cy="305.0" rx="25.8" ry="8.8" fill="#f6f8fa" transform="rotate(180.0 230.5 305.0)"/>
<ellipse cx="233.7" cy="290.4" rx="25.9" ry="8.8" fill="#f6f8fa" transform="rotate(-153.5 233.7 290.4)"/>
<ellipse cx="242.7" cy="278.7" rx="26.3" ry="9.0" fill="#dfe9f2" transform="rotate(-127.6 242.7 278.7)"/>
<ellipse cx="255.8" cy="272.2" rx="26.6" ry="9.1" fill="#f6f8fa" transform="rotate(-102.4 255.8 272.2)"/>
<ellipse cx="270.2" cy="272.2" rx="26.6" ry="9.1" fill="#f6f8fa" transform="rotate(-77.6 270.2 272.2)"/>
<ellipse cx="283.3" cy="278.7" rx="26.3" ry="9.0" fill="#dfe9f2" transform="rotate(-52.4 283.3 278.7)"/>
<ellipse cx="292.3" cy="290.4" rx="25.9" ry="8.8" fill="#f6f8fa" transform="rotate(-26.5 292.3 290.4)"/>
<ellipse cx="263" cy="305" rx="20" ry="16.0" fill="#b88c34"/>
<ellipse cx="384.7" cy="348.8" rx="28.9" ry="9.8" fill="#dfe9f2" transform="rotate(17.3 384.7 348.8)"/>
<ellipse cx="377.3" cy="365.2" rx="30.6" ry="10.4" fill="#f6f8fa" transform="rotate(45.0 377.3 365.2)"/>
<ellipse cx="364.4" cy="376.3" rx="32.4" ry="11.0" fill="#f6f8fa" transform="rotate(69.4 364.4 376.3)"/>
<ellipse cx="348.7" cy="379.7" rx="33.1" ry="11.3" fill="#dfe9f2" transform="rotate(91.8 348.7 379.7)"/>
<ellipse cx="333.2" cy="374.9" rx="32.2" ry="10.9" fill="#f6f8fa" transform="rotate(114.5 333.2 374.9)"/>
<ellipse cx="321.1" cy="362.8" rx="30.2" ry="10.3" fill="#f6f8fa" transform="rotate(139.4 321.1 362.8)"/>
<ellipse cx="314.7" cy="345.8" rx="28.7" ry="9.8" fill="#dfe9f2" transform="rotate(167.6 314.7 345.8)"/>
<ellipse cx="315.3" cy="327.2" rx="28.9" ry="9.8" fill="#f6f8fa" transform="rotate(-162.7 315.3 327.2)"/>
<ellipse cx="322.7" cy="310.8" rx="30.6" ry="10.4" fill="#f6f8fa" transform="rotate(-135.0 322.7 310.8)"/>
<ellipse cx="335.6" cy="299.7" rx="32.4" ry="11.0" fill="#dfe9f2" transform="rotate(-110.6 335.6 299.7)"/>
<ellipse cx="351.3" cy="296.3" rx="33.1" ry="11.3" fill="#f6f8fa" transform="rotate(-88.2 351.3 296.3)"/>
<ellipse cx="366.8" cy="301.1" rx="32.2" ry="10.9" fill="#f6f8fa" transform="rotate(-65.5 366.8 301.1)"/>
<ellipse cx="378.9" cy="313.2" rx="30.2" ry="10.3" fill="#dfe9f2" transform="rotate(-40.6 378.9 313.2)"/>
<ellipse cx="385.3" cy="330.2" rx="28.7" ry="9.8" fill="#f6f8fa" transform="rotate(-12.4 385.3 330.2)"/>
<ellipse cx="350" cy="338" rx="19" ry="15.2" fill="#f0c41e"/>
<ellipse cx="341.1" cy="442.9" rx="30.3" ry="10.3" fill="#dfe9f2" transform="rotate(4.4 341.1 442.9)"/>
<ellipse cx="335.9" cy="457.2" rx="29.4" ry="10.0" fill="#f6f8fa" transform="rotate(27.6 335.9 457.2)"/>
<ellipse cx="324.2" cy="468.0" rx="27.9" ry="9.5" fill="#f6f8fa" transform="rotate(52.9 324.2 468.0)"/>
<ellipse cx="308.2" cy="473.3" rx="26.8" ry="9.1" fill="#dfe9f2" transform="rotate(81.1 308.2 473.3)"/>
<ellipse cx="291.3" cy="472.0" rx="27.0" ry="9.2" fill="#f6f8fa" transform="rotate(110.1 291.3 472.0)"/>
<ellipse cx="276.6" cy="464.4" rx="28.5" ry="9.7" fill="#f6f8fa" transform="rotate(137.3 276.6 464.4)"/>
<ellipse cx="267.2" cy="451.9" rx="29.9" ry="10.2" fill="#dfe9f2" transform="rotate(161.6 267.2 451.9)"/>
<ellipse cx="264.9" cy="437.1" rx="30.3" ry="10.3" fill="#f6f8fa" transform="rotate(-175.6 264.9 437.1)"/>
<ellipse cx="270.1" cy="422.8" rx="29.4" ry="10.0" fill="#f6f8fa" transform="rotate(-152.4 270.1 422.8)"/>
<ellipse cx="281.8" cy="412.0" rx="27.9" ry="9.5" fill="#dfe9f2" transform="rotate(-127.1 281.8 412.0)"/>
<ellipse cx="297.8" cy="406.7" rx="26.8" ry="9.1" fill="#f6f8fa" transform="rotate(-98.9 297.8 406.7)"/>
<ellipse cx="314.7" cy="408.0" rx="27.0" ry="9.2" fill="#f6f8fa" transform="rotate(-69.9 314.7 408.0)"/>
<ellipse cx="329.4" cy="415.6" rx="28.5" ry="9.7" fill="#dfe9f2" transform="rotate(-42.7 329.4 415.6)"/>
<ellipse cx="338.8" cy="428.1" rx="29.9" ry="10.2" fill="#f6f8fa" transform="rotate(-18.4 338.8 428.1)"/>
<ellipse cx="303" cy="440" rx="19" ry="15.2" fill="#f2a61e"/>
</g>
</g>
</svg></div>
    <div class="abs" style="left:1px;bottom:0;width:22px;height:20px;background:#e8852f">
      <svg class="abs" style="left:5px;top:4px" width="13" height="12" viewBox="0 0 13 12"><path d="M6.1 0C7.9 0 9 1.4 9 3.4C9 5 8.4 6.6 7.6 7.6L7.5 8.7L5 8.7L4.7 7.6C3.800000 6.6 3.2 5 3.2 3.4C3.2 1.4 4.300000 0 6.1 0Z" fill="#fff"/><path d="M0 11.8V10.9C0 10.2 .4 9.8 1 9.600000L4.400000 8.6L6.1 10.600000L7.800000 8.6L11.3 9.600000C11.9 9.8 12.4 10.2 12.4 10.9V11.8Z" fill="#fff"/></svg>
    </div>
    <div class="label" style="left:23px;width:59px;padding-left:14.6px">
      <svg class="mic" style="left:3px" width="10" height="13" viewBox="0 0 10 13"><rect x="3.15" y="0.3" width="3.7" height="7.1" rx="1.85" fill="#fff"/><path d="M1.1 4.9C1.1 7.2 2.6 9.2 5 11C7.4 9.2 8.9 7.2 8.9 4.9" stroke="#fff" stroke-width="1.5" fill="none" stroke-linejoin="miter"/></svg>辽喜洋洋</div>
  </div>

  <!-- TILE 5 -->
  <div class="tile b" id="t5" style="left:405px;top:300px;width:267px">
    <div class="avatar" style="left:96px"><svg class="abs" style="left:0;top:0" width="75" height="75" viewBox="0 0 75 75">
<defs>
<filter id="fb1" x="-20%" y="-20%" width="140%" height="140%"><feGaussianBlur stdDeviation="2.5"/></filter>
<filter id="fb2" x="-40%" y="-40%" width="180%" height="180%"><feGaussianBlur stdDeviation="9"/></filter>
<radialGradient id="baby" cx="0.42" cy="0.3" r="0.75"><stop offset="0" stop-color="#f0d9ca"/><stop offset="0.55" stop-color="#e4c1ae"/><stop offset="1" stop-color="#bf9480"/></radialGradient>
<pattern id="dia" width="34" height="34" patternUnits="userSpaceOnUse" patternTransform="rotate(12)"><rect width="34" height="34" fill="#693843"/><path d="M9,2 L15,9 L9,16 L3,9Z" fill="#d8b2a8"/><path d="M26,19 L32,26 L26,33 L20,26Z" fill="#cfa49c"/><circle cx="26" cy="8" r="2.4" fill="#b58488"/><circle cx="9" cy="25" r="2.4" fill="#b58488"/></pattern>
</defs>
<g transform="scale(0.17516) translate(-103,-68)">
<rect x="95" y="60" width="445" height="445" fill="#4a322c"/>
<!-- adult behind -->
<path d="M95,60 L200,60 L190,160 L95,160Z" fill="#5b3a32"/>
<path d="M150,70 C170,90 182,120 184,150 L160,150 C158,120 150,95 140,75Z" fill="#c48c84" filter="url(#fb1)"/>
<!-- right dark strip -->
<rect x="498" y="60" width="42" height="235" fill="#3a2a26"/>
<!-- baby head -->
<g filter="url(#fb1)">
<path d="M186,68 C180,120 182,180 205,240 C230,300 290,335 365,335 C440,335 500,300 512,220 C518,170 512,110 500,68Z" fill="url(#baby)"/>
</g>
<g filter="url(#fb2)">
<ellipse cx="275" cy="262" rx="32" ry="26" fill="#eab6a6" opacity=".8"/>
<ellipse cx="455" cy="268" rx="30" ry="26" fill="#e2a898" opacity=".8"/>
<ellipse cx="490" cy="170" rx="18" ry="80" fill="#b88c7c" opacity=".8"/>
<ellipse cx="330" cy="100" rx="90" ry="28" fill="#f7e9e0"/>
</g>
<g filter="url(#fb1)">
<ellipse cx="296" cy="188" rx="27" ry="11" fill="#2a1c1c" transform="rotate(8 296 188)"/>
<ellipse cx="430" cy="200" rx="24" ry="10" fill="#2a1c1c" transform="rotate(4 430 200)"/>
<path d="M340,258 Q365,272 390,256" stroke="#c48c7c" stroke-width="7" fill="none"/>
<ellipse cx="362" cy="240" rx="20" ry="14" fill="#f4dccd"/>
<path d="M338,298 Q362,290 388,298 Q364,312 338,298Z" fill="#cf847c"/>
</g>
<!-- white clothes -->
<path d="M345,335 C420,345 480,320 540,285 L540,505 L345,505Z" fill="#eeeeec"/>
<path d="M420,345 C440,380 460,430 440,470 L400,470Z" fill="#c9c9c9" opacity=".7" filter="url(#fb1)"/>
<!-- bib -->
<path d="M270,298 C320,320 380,326 430,316 C465,308 492,296 508,284 L512,300 C480,326 440,342 390,346 C340,348 300,338 278,326Z" fill="#e2b41e" filter="url(#fb1)"/>
<!-- maroon cloth -->
<path d="M95,150 L176,150 C192,190 205,240 216,292 L95,292Z" fill="url(#dia)"/>
<path d="M95,150 L176,150 C192,190 205,240 216,292 L95,292Z" fill="#a07078" opacity=".25"/>
<path d="M95,284 C150,286 220,296 262,312 C295,326 304,350 302,420 C312,455 335,485 352,505 L95,505Z" fill="url(#dia)"/>
<path d="M95,286 C150,288 210,296 250,310" stroke="#4c2830" stroke-width="7" fill="none" opacity=".7" filter="url(#fb1)"/>
<!-- fist -->
<g filter="url(#fb1)">
<path d="M296,392 C294,352 325,334 368,334 C415,334 452,356 452,395 C452,432 430,456 398,456 C380,452 350,448 330,440 C308,432 297,418 296,392Z" fill="#e8c2b1"/>
<path d="M396,412 C412,422 420,440 410,458" stroke="#c0887a" stroke-width="7" fill="none"/>
<path d="M330,440 C350,448 380,452 398,456" stroke="#c89888" stroke-width="6" fill="none"/>
<ellipse cx="345" cy="378" rx="30" ry="22" fill="#f6dccf"/>
</g>
</g>
</svg></div>
    <div class="label" style="width:126px">
      <svg class="mic" width="10" height="13" viewBox="0 0 10 13"><rect x="3.15" y="0.3" width="3.7" height="7.1" rx="1.85" fill="#fff"/><rect x="3.15" y="5.9" width="3.7" height="1.5" rx="0.75" fill="#1fc465"/><path d="M1.1 4.9C1.1 7.2 2.6 9.2 5 11C7.4 9.2 8.9 7.2 8.9 4.9" stroke="#fff" stroke-width="1.5" fill="none" stroke-linejoin="miter"/></svg>豫p很萌的我<span class="at">@腾讯会议</span></div>
  </div>
</div>
</body>
</html>
